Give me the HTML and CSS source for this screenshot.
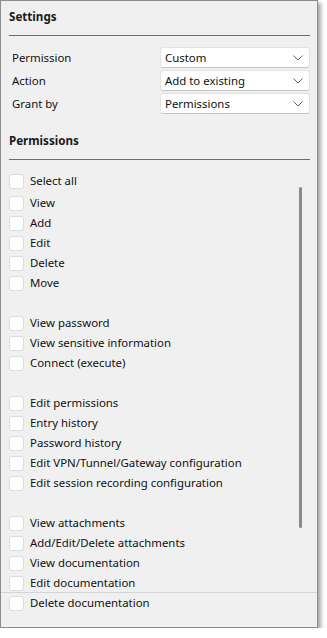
FILE: index.html
```html
<!DOCTYPE html>
<html lang="en">
<head>
  <meta charset="UTF-8" />
  <title>Settings</title>
  <link rel="stylesheet" href="styles.css">
</head>
<body>
  <div class="panel">
    <h2 class="section-title">Settings</h2>
    <div class="settings">
      <div class="field">
        <span class="field-label">Permission</span>
        <div class="select"><span>Custom</span><svg class="chev" width="10" height="6" viewBox="0 0 10 6"><polyline points="0.5,0.5 5,5 9.5,0.5" /></svg></div>
      </div>
      <div class="field">
        <span class="field-label">Action</span>
        <div class="select"><span>Add to existing</span><svg class="chev" width="10" height="6" viewBox="0 0 10 6"><polyline points="0.5,0.5 5,5 9.5,0.5" /></svg></div>
      </div>
      <div class="field">
        <span class="field-label">Grant by</span>
        <div class="select"><span>Permissions</span><svg class="chev" width="10" height="6" viewBox="0 0 10 6"><polyline points="0.5,0.5 5,5 9.5,0.5" /></svg></div>
      </div>
    </div>

    <h2 class="section-title">Permissions</h2>
    <div class="check select-all"><span class="box"></span>Select all</div>
    <div class="list">
      <div class="check"><span class="box"></span>View</div>
      <div class="check"><span class="box"></span>Add</div>
      <div class="check"><span class="box"></span>Edit</div>
      <div class="check"><span class="box"></span>Delete</div>
      <div class="check"><span class="box"></span>Move</div>
      <div class="gap"></div>
      <div class="check"><span class="box"></span>View password</div>
      <div class="check"><span class="box"></span>View sensitive information</div>
      <div class="check"><span class="box"></span>Connect (execute)</div>
      <div class="gap"></div>
      <div class="check"><span class="box"></span>Edit permissions</div>
      <div class="check"><span class="box"></span>Entry history</div>
      <div class="check"><span class="box"></span>Password history</div>
      <div class="check"><span class="box"></span>Edit VPN/Tunnel/Gateway configuration</div>
      <div class="check"><span class="box"></span>Edit session recording configuration</div>
      <div class="gap"></div>
      <div class="check"><span class="box"></span>View attachments</div>
      <div class="check"><span class="box"></span>Add/Edit/Delete attachments</div>
      <div class="check"><span class="box"></span>View documentation</div>
      <div class="check"><span class="box"></span>Edit documentation</div>
      <div class="scrollbar"></div>
    </div>
    <div class="check"><span class="box"></span>Delete documentation</div>
  </div>
</body>
</html>
```

FILE: styles.css
```css
body {
  margin: 0;
  background: #ffffff;
  font-family: 'Noto Sans', sans-serif;
  font-size: 11.4px;
  color: #111;
}
.panel {
  width: 301px;
  height: 626px;
  padding: 0 7px 0 8px;
  background: #f0f0f0;
  border: 1px solid #8c8c8c;
  box-shadow: 3px 3px 4px rgba(0,0,0,0.35);
}
.section-title {
  margin: 0;
  padding: 8px 0 10px;
  font-size: 11.6px;
  line-height: 16px;
  font-weight: bold;
  color: #1a1a1a;
  border-bottom: 1px solid #6e6e6e;
}
.settings {
  display: flex;
  flex-direction: column;
  gap: 2px;
  margin: 11px 0 11px;
}
.field {
  display: flex;
  align-items: center;
  justify-content: space-between;
  height: 21px;
  padding-left: 3px;
}
.select {
  box-sizing: border-box;
  width: 150px;
  height: 21px;
  display: flex;
  align-items: center;
  justify-content: space-between;
  padding: 0 6px 0 4px;
  background: #fff;
  border: 1px solid #e3e3e3;
  border-bottom-color: #c4c4c4;
  border-radius: 3px;
  color: #111;
}
.chev polyline {
  fill: none;
  stroke: #606060;
  stroke-width: 1;
}
.check {
  display: flex;
  align-items: center;
  gap: 6px;
  height: 20px;
  line-height: 16px;
}
.box {
  box-sizing: border-box;
  width: 15px;
  height: 15px;
  background: #fff;
  border: 1px solid #dcdcdc;
  border-radius: 3px;
}
.select-all {
  margin-top: 11px;
}
.list {
  position: relative;
  margin: 2px -7px 0 -8px;
  padding: 0 7px 0 8px;
  height: 399px;
  border-bottom: 1px solid #d4d4d4;
}
.gap {
  height: 20px;
}
.scrollbar {
  position: absolute;
  left: 298px;
  top: -6px;
  width: 3px;
  height: 341px;
  background: #8a8a8a;
  border-radius: 2px;
}
```
